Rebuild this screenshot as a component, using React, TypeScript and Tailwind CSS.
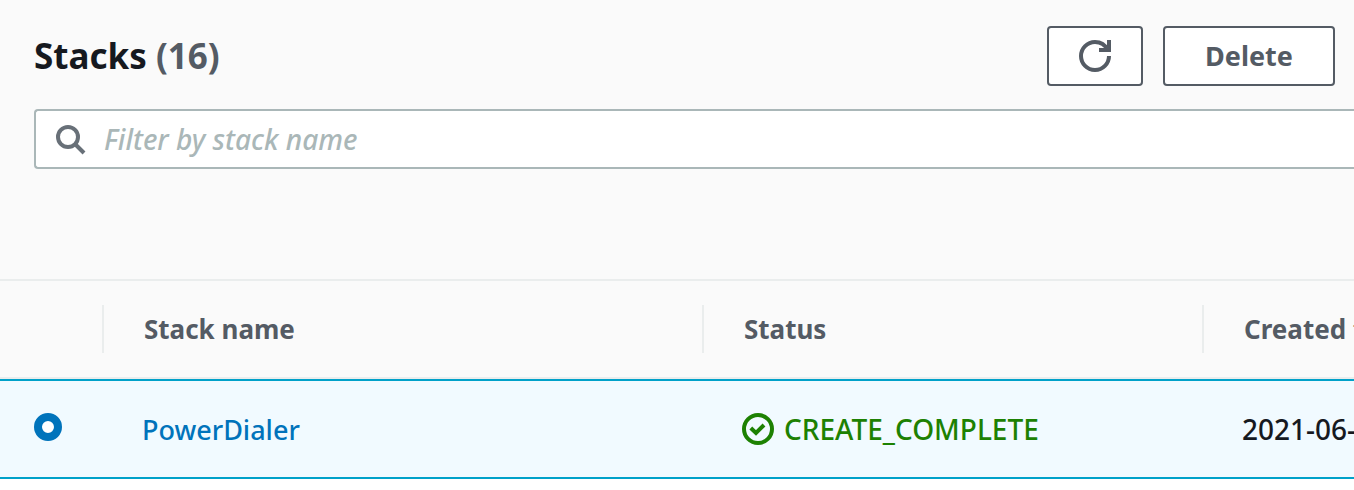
import React, { useState } from 'react';

interface Stack {
  name: string;
  status: string;
  created: string;
}

const STACKS: Stack[] = [{ name: 'PowerDialer', status: 'CREATE_COMPLETE', created: '2021-06-' }];
const TOTAL = 16;

const iconProps = {
  viewBox: '0 0 16 16',
  fill: 'none',
  stroke: 'currentColor',
  strokeWidth: 2,
  'aria-hidden': true,
} as const;

function RefreshIcon() {
  return (
    <svg {...iconProps} className="size-8">
      <path d="M15 8c0 3.87-3.13 7-7 7s-7-3.13-7-7 3.13-7 7-7c2.79 0 5.2 1.63 6.33 4" />
      <path d="M10 5h5V0" />
      <path d="M12 2.5 14 4.5V2.5z" fill="currentColor" stroke="none" />
    </svg>
  );
}

function SearchIcon() {
  return (
    <svg {...iconProps} className="size-8 shrink-0 text-[#687078]">
      <circle cx="7" cy="7" r="5" />
      <path d="m15 15-4.5-4.5" />
    </svg>
  );
}

function SuccessIcon() {
  return (
    <svg {...iconProps} className="size-8 shrink-0">
      <circle cx="8" cy="8" r="7" />
      <path d="m4.4 7.5 2.6 2.5 4-4" />
    </svg>
  );
}

const btn =
  'flex h-15 items-center justify-center rounded-sm border-2 border-[#545b64] bg-white text-[27px] font-bold text-[#545b64]';
const th = 'h-25 border-y-2 border-[#eaeded] p-0 text-left text-[26px] font-bold text-[#545b64]';
const thInner = 'flex h-12 items-center overflow-hidden whitespace-nowrap border-[#eaeded] pl-10';
const td = 'h-25 border-y-2 border-[#00a1c9] p-0 pl-[38px] whitespace-nowrap overflow-hidden';

export default function App() {
  const [filter, setFilter] = useState('');
  const [selected, setSelected] = useState('PowerDialer');

  return (
    <main className="min-h-screen overflow-hidden bg-white font-['Noto_Sans',sans-serif] text-[28px] leading-10 font-medium text-[#16191f]">
      <header className="bg-[#fafafa] pt-[26px] pb-[110px] pl-[34px]">
        <div className="flex items-center justify-between pr-[19px]">
          <h1 className="text-[35px] font-bold">
            Stacks <span className="text-[#545b64]">({TOTAL})</span>
          </h1>
          <div className="flex gap-5">
            <button type="button" aria-label="Refresh" className={`${btn} w-24`}>
              <RefreshIcon />
            </button>
            <button type="button" className={`${btn} w-43`}>
              Delete
            </button>
          </div>
        </div>

        <label className="mt-[23px] flex h-15 items-center gap-[18px] rounded-l-sm border-2 border-r-0 border-[#aab7b8] bg-white pl-[18px]">
          <SearchIcon />
          <input
            type="text"
            aria-label="Filter by stack name"
            placeholder="Filter by stack name"
            value={filter}
            onChange={(e) => setFilter(e.target.value)}
            className="min-w-0 flex-1 bg-transparent outline-none placeholder:text-[#aab7b8] placeholder:italic"
          />
        </label>
      </header>

      <table className="w-full table-fixed border-separate border-spacing-0">
        <thead className="bg-[#fafafa]">
          <tr>
            <th scope="col" className={`${th} w-26`}>
              <div className={`${thInner} border-r-2`} />
            </th>
            <th scope="col" className={`${th} w-150`}>
              <div className={`${thInner} border-r-2`}>Stack name</div>
            </th>
            <th scope="col" className={`${th} w-125`}>
              <div className={`${thInner} border-r-2`}>Status</div>
            </th>
            <th scope="col" className={th}>
              <div className={thInner}>Created time</div>
            </th>
          </tr>
        </thead>
        <tbody>
          {STACKS.map((stack) => (
            <tr key={stack.name} className="bg-[#f1faff]">
              <td className="border-y-2 border-[#00a1c9] p-0 pl-[34px]">
                <input
                  type="radio"
                  name="stack"
                  aria-label={stack.name}
                  checked={selected === stack.name}
                  onChange={() => setSelected(stack.name)}
                  className="mb-1 block size-7 appearance-none rounded-full border-2 border-[#aab7b8] bg-white checked:border-8 checked:border-[#0073bb]"
                />
              </td>
              <td className={td}>
                <a href="#stack" className="text-[27px] text-[#0073bb]">
                  {stack.name}
                </a>
              </td>
              <td className={td}>
                <span className="flex items-center gap-2.5 text-[#1d8102]">
                  <SuccessIcon />
                  {stack.status}
                </span>
              </td>
              <td className={td}>{stack.created}</td>
            </tr>
          ))}
        </tbody>
      </table>
    </main>
  );
}
